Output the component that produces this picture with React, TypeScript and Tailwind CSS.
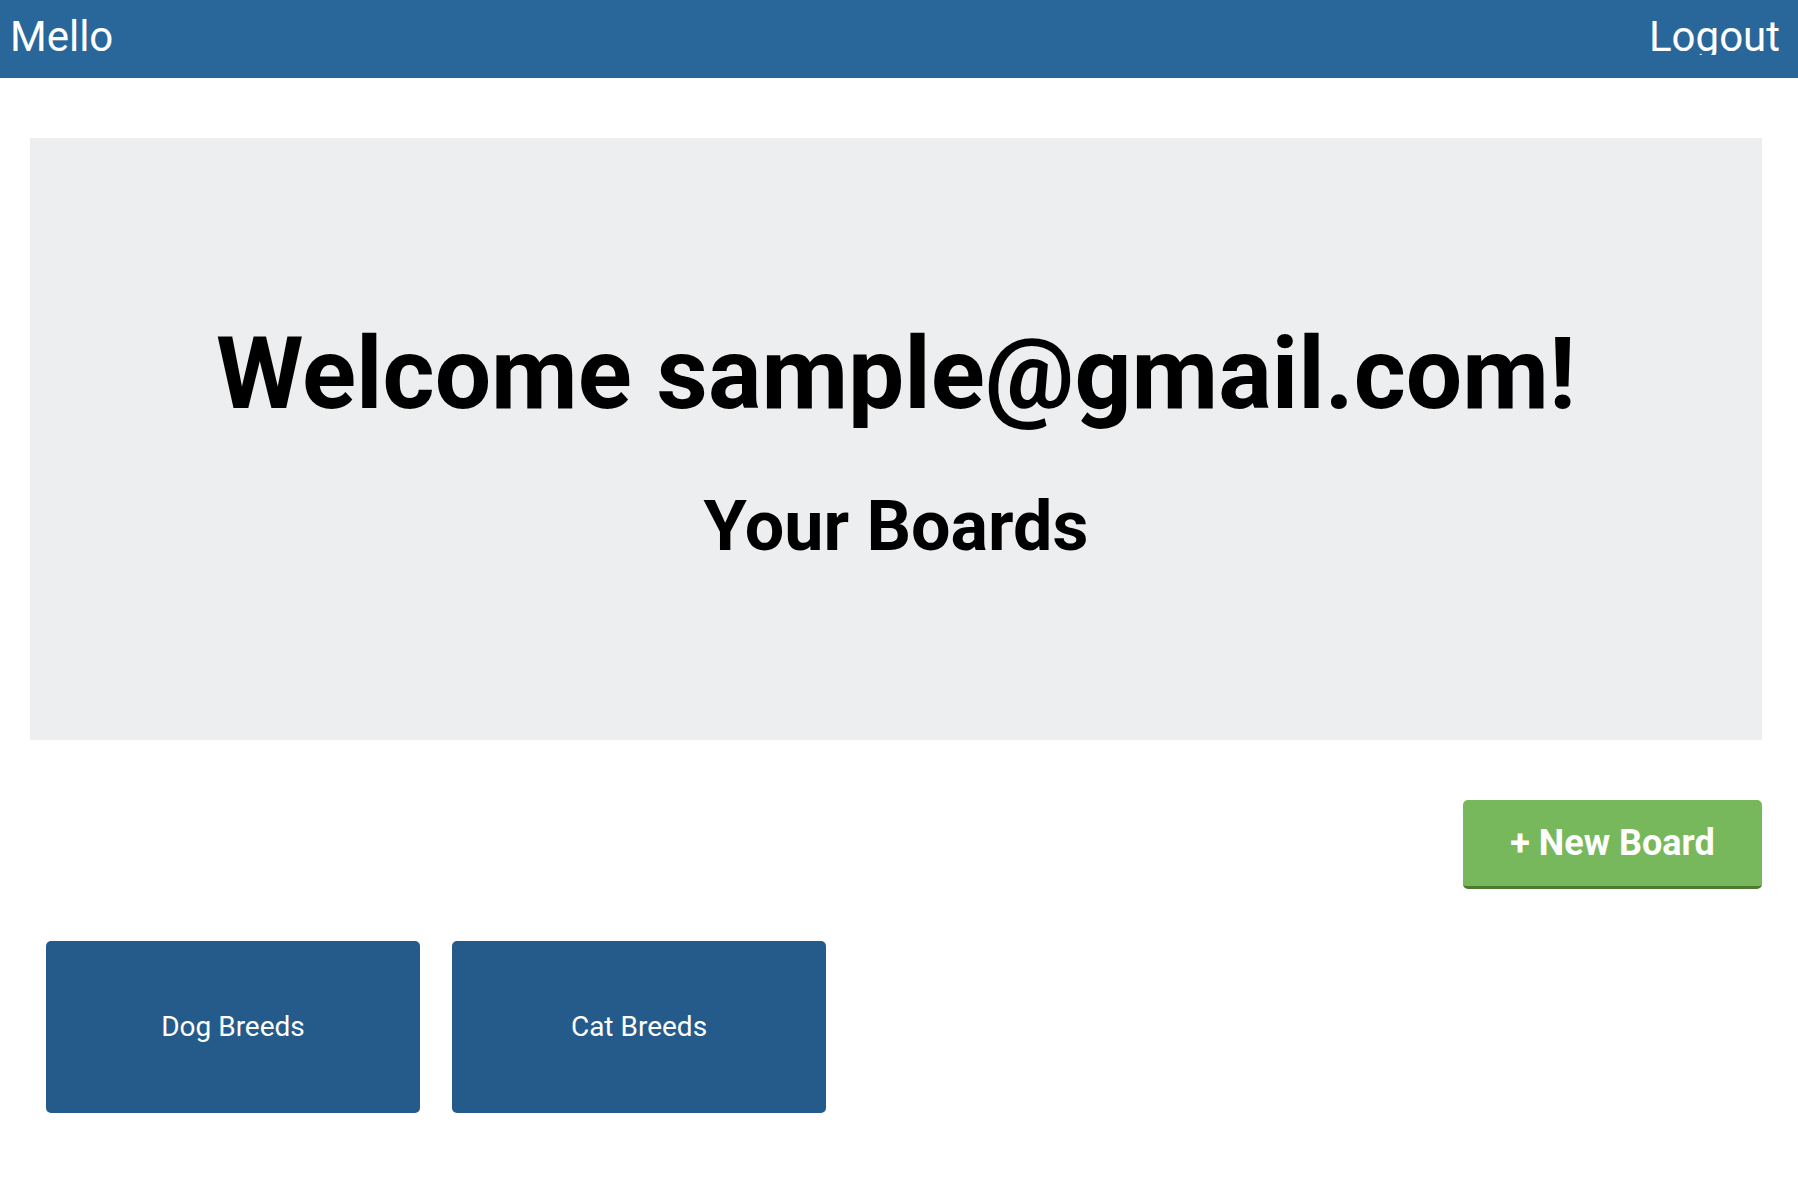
const boards = [
  { id: 1, title: 'Dog Breeds' },
  { id: 2, title: 'Cat Breeds' },
];

export default function App() {
  return (
    <div className="min-h-screen bg-white font-['Roboto',sans-serif]">
      <header className="flex h-[78px] items-start justify-between bg-[#29679b] pl-[10px] pr-[18px] pt-[16px] text-white">
        <span className="text-[42px] leading-none">Mello</span>
        <span className="h-[39px] overflow-hidden text-[42px] leading-none">Logout</span>
      </header>

      <section className="ml-[30px] mr-[36px] mt-[60px] flex h-[602px] flex-col items-center bg-[#edeef0] pt-[186px] text-black">
        <h1 className="text-[100px] font-bold leading-none">Welcome sample@gmail.com!</h1>
        <h2 className="mt-[67px] text-[70px] font-bold leading-none">Your Boards</h2>
      </section>

      <div className="mr-[36px] mt-[60px] flex justify-end">
        <button className="h-[89px] w-[299px] rounded-[5px] border-b-[3px] border-[#4b7a30] bg-[#78b85d] text-[36px] font-bold text-white">
          + New Board
        </button>
      </div>

      <div className="ml-[46px] mt-[52px] flex gap-[32px]">
        {boards.map((b) => (
          <div
            key={b.id}
            className="flex h-[172px] w-[374px] items-center justify-center rounded-[5px] bg-[#255b8a] text-[28px] text-white"
          >
            {b.title}
          </div>
        ))}
      </div>
    </div>
  );
}
